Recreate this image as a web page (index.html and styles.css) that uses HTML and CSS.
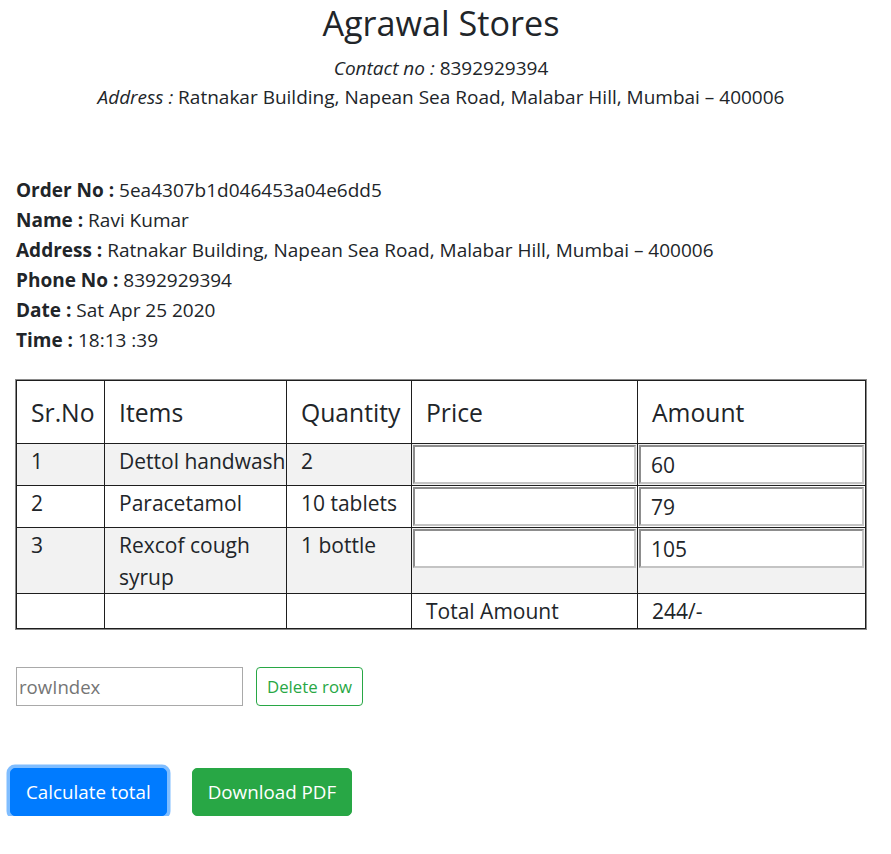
FILE: index.html
```html
<!DOCTYPE html>
<html lang="en">
<head>
<meta charset="utf-8">
<title>Agrawal Stores</title>
<link rel="stylesheet" href="styles.css">
</head>
<body>
<header class="shop">
  <h1 class="shop-name">Agrawal Stores</h1>
  <p class="shop-line first"><em>Contact no :</em> 8392929394</p>
  <p class="shop-line"><em>Address :</em> Ratnakar Building, Napean Sea Road, Malabar Hill, Mumbai – 400006</p>
</header>

<section class="order">
  <div class="order-line"><b>Order No :</b> 5ea4307b1d046453a04e6dd5</div>
  <div class="order-line"><b>Name :</b> Ravi Kumar</div>
  <div class="order-line"><b>Address :</b> Ratnakar Building, Napean Sea Road, Malabar Hill, Mumbai – 400006</div>
  <div class="order-line"><b>Phone No :</b> 8392929394</div>
  <div class="order-line"><b>Date :</b> Sat Apr 25 2020</div>
  <div class="order-line"><b>Time :</b> 18:13 :39</div>
</section>

<table class="bill">
  <colgroup>
    <col class="c-sr">
    <col class="c-item">
    <col class="c-qty">
    <col class="c-price">
    <col class="c-amt">
  </colgroup>
  <thead>
    <tr><th>Sr.No</th><th>Items</th><th>Quantity</th><th>Price</th><th>Amount</th></tr>
  </thead>
  <tbody>
    <tr class="odd">
      <td>1</td><td>Dettol handwash</td><td>2</td>
      <td class="inp"><input class="cell-input" type="text"></td>
      <td class="inp"><input class="cell-input" type="text" value="60"></td>
    </tr>
    <tr>
      <td>2</td><td>Paracetamol</td><td>10 tablets</td>
      <td class="inp"><input class="cell-input" type="text"></td>
      <td class="inp"><input class="cell-input" type="text" value="79"></td>
    </tr>
    <tr class="odd">
      <td>3</td><td>Rexcof cough syrup</td><td>1 bottle</td>
      <td class="inp"><input class="cell-input" type="text"></td>
      <td class="inp"><input class="cell-input" type="text" value="105"></td>
    </tr>
    <tr class="total">
      <td></td><td></td><td></td><td>Total Amount</td><td>244/-</td>
    </tr>
  </tbody>
</table>

<div class="delete-row">
  <input class="row-index" type="text" placeholder="rowIndex">
  <button class="btn btn-outline-success" type="button">Delete row</button>
</div>

<div class="actions">
  <button class="btn-lg btn-primary is-focused" type="button">Calculate total</button>
  <button class="btn-lg btn-success" type="button">Download PDF</button>
</div>
</body>
</html>
```

FILE: styles.css
```css
html, body {
  margin: 0;
  padding: 0;
  background: #fff;
}

body {
  font-family: "Open Sans", "Noto Sans", sans-serif;
  color: #212529;
  font-size: 19px;
}

.shop {
  text-align: center;
  padding-right: 9px;
}

.shop-name {
  margin: 0;
  font-size: 34.2px;
  line-height: 46px;
  font-weight: 500;
}

.shop-line {
  margin: 0;
  font-size: 19px;
  line-height: 29px;
}

.shop-line.first {
  margin-top: 8px;
}

.order {
  margin-top: 63px;
  padding-left: 16px;
}

.order-line {
  font-size: 19px;
  line-height: 30px;
}

.order-line b {
  font-weight: 700;
}

.bill {
  margin: 25px 0 0 16px;
  width: 849px;
  table-layout: fixed;
  border-collapse: collapse;
  outline: 1px solid #8a8a8a;
}

.c-sr { width: 88px; }
.c-item { width: 182px; }
.c-qty { width: 125px; }
.c-price { width: 226px; }
.c-amt { width: 228px; }

.bill th,
.bill td {
  border: 1px solid #1e1e1e;
  text-align: left;
  vertical-align: top;
}

.bill th {
  font-size: 24.7px;
  font-weight: 500;
  line-height: 33px;
  padding: 15px 4px 14px 14px;
}

.bill td {
  font-size: 21px;
  line-height: 32px;
  padding: 1px 0 0 14px;
}

.bill tr.odd td {
  background: #f2f2f2;
}

.bill td.inp {
  padding: 1px;
}

.cell-input {
  display: block;
  box-sizing: border-box;
  width: 100%;
  height: 39px;
  margin: 0;
  padding: 0 10px;
  border: 2px solid;
  border-color: #8d8d8d #c4c4c4 #c4c4c4 #8d8d8d;
  background: #fff;
  font-family: inherit;
  font-size: 21px;
  color: #212529;
}

.bill tr.total td {
  line-height: 30px;
  padding: 2px 0 2px 14px;
}

.delete-row {
  display: flex;
  align-items: center;
  gap: 13px;
  margin: 38px 0 0 16px;
}

.row-index {
  box-sizing: border-box;
  width: 227px;
  height: 39px;
  margin: 0;
  padding: 1px 2px;
  border: 1px solid #a9a9a9;
  font-family: inherit;
  font-size: 18.6px;
  color: #212529;
}

.row-index::placeholder {
  color: #757575;
}

.btn {
  box-sizing: border-box;
  height: 39px;
  padding: 0 10px;
  border-radius: 4px;
  font-family: inherit;
  font-size: 16.8px;
  line-height: 24px;
  background: #fff;
  cursor: pointer;
}

.btn-outline-success {
  border: 1px solid #28a745;
  color: #28a745;
}

.actions {
  display: flex;
  gap: 25px;
  margin: 62px 0 0 10px;
}

.btn-lg {
  box-sizing: border-box;
  height: 48px;
  padding: 0 15px;
  border: 1px solid transparent;
  border-radius: 5px;
  font-family: inherit;
  font-size: 18.8px;
  line-height: 30px;
  color: #fff;
  cursor: pointer;
}

.btn-primary {
  background: #007bff;
  border-color: #007bff;
}

.btn-primary.is-focused {
  box-shadow: 0 0 0 3.5px rgba(0, 123, 255, 0.5);
}

.btn-success {
  background: #28a745;
  border-color: #28a745;
}
```
